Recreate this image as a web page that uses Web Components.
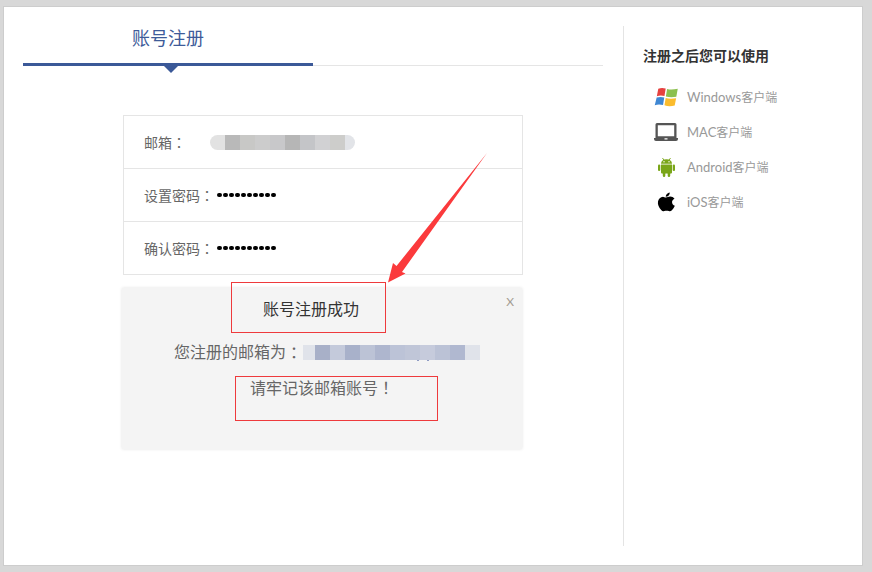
<!DOCTYPE html>
<html lang="zh">
<head>
<meta charset="utf-8">
<title>账号注册</title>
<style>
	html, body { margin: 0; height: 100%; }
	body { font-family: "Lato", "Noto Sans CJK SC", sans-serif; }
</style>
</head>
<body>
<reg-page>
	<reg-tabs title-text="账号注册"></reg-tabs>
	<reg-form>
		<form-row label="邮箱："><pixel-blur slot="value" variant="mail"></pixel-blur></form-row>
		<form-row label="设置密码："><pass-dots slot="value"></pass-dots></form-row>
		<form-row label="确认密码："><pass-dots slot="value"></pass-dots></form-row>
	</reg-form>
	<success-dialog></success-dialog>
	<client-list slot="side" heading="注册之后您可以使用">
		<client-item name="Windows" icon="windows"></client-item>
		<client-item name="MAC" icon="mac"></client-item>
		<client-item name="Android" icon="android"></client-item>
		<client-item name="iOS" icon="ios"></client-item>
	</client-list>
</reg-page>

<script>
	(() => {
		const CJK = `"Lato", "Noto Sans CJK SC", sans-serif`;

		// full-width punctuation sits centred in the reference, as the TC cut draws it
		const punct = text => text.replace(/[：！]/g, m => `<span lang="zh-Hant" style="font-family:'Noto Sans CJK TC',sans-serif">${m}</span>`);

		const define = (name, render) => {
			customElements.define(name, class extends HTMLElement {
				constructor() {
					super();
					this.attachShadow({ mode: 'open' });
				}
				connectedCallback() {
					this.shadowRoot.innerHTML = render(this);
				}
			});
		};

		define('reg-page', () => `
			<style>
				:host {
					display: block;
					box-sizing: border-box;
					width: 872px;
					height: 572px;
					padding: 6px 9px 6px 3px;
					background: #d8d8d8;
					font-family: ${CJK};
				}
				.panel {
					box-sizing: border-box;
					position: relative;
					height: 100%;
					display: grid;
					grid-template-columns: 619px 1fr;
					background: #fff;
					border: 1px solid #cdcdcd;
				}
				.main { padding: 0 0 0 19px; }
				.side {
					margin-top: 19px;
					height: 520px;
					border-left: 1px solid #e4e4e4;
					padding-left: 19px;
				}
				svg { position: absolute; left: -1px; top: -1px; margin: -6px 0 0 -3px; pointer-events: none; }
			</style>
			<div class="panel">
				<div class="main"><slot></slot></div>
				<div class="side"><slot name="side"></slot></div>
				<svg width="872" height="572" viewBox="0 0 872 572">
					<path d="M487 153 L402 272 L405.500 273.500 L388 282.500 L393 263 L396.500 266 Z" fill="#fb3a3c"/>
				</svg>
			</div>
		`);

		define('reg-tabs', el => `
			<style>
				:host { display: block; width: 580px; height: 58px; position: relative; border-bottom: 1px solid #e5e5e5; }
				.tab {
					box-sizing: border-box;
					width: 290px;
					height: 59px;
					padding-top: 18px;
					border-bottom: 3px solid #3b5998;
					text-align: center;
					font-size: 18px;
					line-height: 26px;
					color: #3e5b99;
				}
				.caret {
					position: absolute;
					left: 141px;
					top: 59px;
					width: 0;
					height: 0;
					border: 7px solid transparent;
					border-top-color: #3b5998;
					border-bottom: 0;
				}
			</style>
			<div class="tab">${el.getAttribute('title-text')}</div>
			<div class="caret"></div>
		`);

		define('reg-form', () => `
			<style>
				:host {
					display: block;
					box-sizing: border-box;
					width: 400px;
					margin: 49px 0 0 100px;
					border: 1px solid #e5e5e5;
				}
				::slotted(form-row:not(:last-child)) { border-bottom: 1px solid #e5e5e5; }
			</style>
			<slot></slot>
		`);

		define('form-row', el => `
			<style>
				:host {
					display: flex;
					align-items: center;
					box-sizing: border-box;
					height: 53px;
					padding-left: 20px;
					font-size: 14px;
					color: #666;
				}
				:host(:last-child) { height: 52px; }
				.label { white-space: nowrap; }
			</style>
			<span class="label">${punct(el.getAttribute('label'))}</span>
			<slot name="value"></slot>
		`);

		define('pass-dots', () => `
			<style>
				:host { display: flex; gap: 1.500px; margin-left: 3px; }
				i { width: 4.500px; height: 4.500px; border-radius: 50%; background: #000; }
			</style>
			${'<i></i>'.repeat(10)}
		`);

		const BLUR = {
			mail: { cells: ['#e2e2e2', '#b9b9b9', '#c8c8c6', '#cccccc', '#c8c8ca', '#b6b6b6', '#c4c5c8', '#d1d1d3', '#cdcdcb', '#e2e4e8'], first: 15, last: 10, margin: '0 0 0 24px', radius: '8px' },
			dialog: { cells: ['#e0e3ea', '#a8b0c8', '#c4cadb', '#a8b1ca', '#bcc3d6', '#aeb6ce', '#bcc3d7', '#c0c6d8', '#c6cbdc', '#bbc2d6', '#b0b8d0', '#e0e3ea'], first: 12, last: 15, margin: '0 0 0 1px', radius: '0' }
		};

		define('pixel-blur', el => {
			const b = BLUR[el.getAttribute('variant')];
			const cells = b.cells.map((c, i) => {
				const w = i === 0 ? b.first : i === b.cells.length - 1 ? b.last : 15;
				return `<i style="width:${w}px;background:${c}"></i>`;
			}).join('');
			return `
				<style>
					:host { display: inline-flex; height: 15px; margin: ${b.margin}; border-radius: ${b.radius}; overflow: hidden; }
					i { display: block; height: 15px; }
				</style>
				${cells}
			`;
		});

		define('success-dialog', () => `
			<style>
				:host {
					display: block;
					position: relative;
					box-sizing: border-box;
					width: 400px;
					height: 161px;
					margin: 13px 0 0 99px;
					padding-top: 8px;
					background: #f4f4f4;
					box-shadow: 0 0 3px rgba(0, 0, 0, .12);
					color: #666;
					font-size: 16px;
				}
				.title { height: 26px; line-height: 26px; padding-right: 22px; text-align: center; color: #333; }
				.mail { display: flex; align-items: center; height: 26px; margin-top: 17px; padding-left: 52px; line-height: 26px; }
				.tip { height: 26px; line-height: 26px; margin-top: 9px; padding-left: 128px; }
				.close { position: absolute; right: 8px; top: 5px; font-size: 12px; line-height: 18px; color: #a39c92; }
				.box { position: absolute; box-sizing: border-box; border: 1px solid rgb(238, 58, 60); }
				.m1 { left: 109px; top: -6px; width: 155px; height: 51px; }
				.m2 { left: 113px; top: 88px; width: 203px; height: 45px; }
				.speck { position: absolute; top: 72px; width: 2px; height: 1px; background: #8f9cc4; }
			</style>
			<div class="title">账号注册成功</div>
			<div class="mail">${punct('您注册的邮箱为：')}<pixel-blur variant="dialog"></pixel-blur></div>
			<div class="tip">${punct('请牢记该邮箱账号！')}</div>
			<span class="close">X</span>
			<div class="box m1"></div>
			<div class="box m2"></div>
			<i class="speck" style="left:295px"></i>
			<i class="speck" style="left:305px"></i>
		`);

		define('client-list', el => `
			<style>
				:host { display: block; padding-top: 20px; }
				h3 { margin: 0 0 13px; font-size: 14px; line-height: 20px; font-weight: 700; color: #333; }
				.items { display: flex; flex-direction: column; padding-left: 11px; }
			</style>
			<h3>${el.getAttribute('heading')}</h3>
			<div class="items"><slot></slot></div>
		`);

		const ICONS = {
			windows: `<svg width="26" height="20" viewBox="0 0 26 20"><g transform="scale(.95 1)">
				<path d="M4.500 1.800 Q8 .2 12.300 1.500 L11 9 Q7 7.800 3 9.200 Z" fill="#e6413f"/>
				<path d="M13.800 2 Q18 3.300 25 1.800 L23.500 9.700 Q17.500 10.800 12.500 9.400 Z" fill="#8cc04f"/>
				<path d="M2.800 10.500 Q7 9.300 10.800 10.500 L9.500 18 Q5 16.700 .8 18.200 Z" fill="#3f87d3"/>
				<path d="M12.300 11 Q17 12.200 23.300 11.200 L21.800 18.500 Q16 20 11 18.300 Z" fill="#fbbc2d"/>
			</g></svg>`,
			mac: `<svg width="26" height="20" viewBox="0 0 26 20">
				<path d="M3 1 H21 A1.500 1.500 0 0 1 22.500 2.500 V16 H1.500 V2.500 A1.500 1.500 0 0 1 3 1 Z M3.800 3.200 V14.300 H20.200 V3.200 Z" fill="#555" fill-rule="evenodd"/>
				<path d="M0 16 H24 V17 Q24 19 22 19 H2 Q0 19 0 17 Z M10.500 16.300 V17.500 H13.500 V16.300 Z" fill="#555" fill-rule="evenodd"/>
			</svg>`,
			android: `<svg width="26" height="20" viewBox="0 0 26 20"><g transform="translate(-.5 0)">
				<path d="M9 1 L10.300 3 M17 1 L15.700 3" stroke="#7aa619" stroke-width=".9" fill="none"/>
				<path d="M7.500 6.800 Q7.800 2.200 13 2.200 Q18.200 2.200 18.500 6.800 Z" fill="#7aa619"/>
				<path d="M7.500 7.500 H18.500 V15.500 Q18.500 16.500 17.500 16.500 H8.500 Q7.500 16.500 7.500 15.500 Z" fill="#7aa619"/>
				<rect x="4.500" y="7.500" width="2.300" height="6.500" rx="1.100" fill="#7aa619"/>
				<rect x="19.200" y="7.500" width="2.300" height="6.500" rx="1.100" fill="#7aa619"/>
				<rect x="9.300" y="15" width="2.500" height="5" rx="1.200" fill="#7aa619"/>
				<rect x="14.200" y="15" width="2.500" height="5" rx="1.200" fill="#7aa619"/>
				<circle cx="10.500" cy="4.700" r=".7" fill="#fff"/>
				<circle cx="15.500" cy="4.700" r=".7" fill="#fff"/>
			</g></svg>`,
			ios: `<svg width="26" height="20" viewBox="0 0 26 20"><g transform="translate(-2.600 0) scale(1.100 1)">
				<path d="M13 5.500 C14.500 5.500 15.500 4.600 17 4.600 C18.700 4.600 20 5.400 21 6.800 C19.300 7.800 18.700 9 18.800 10.400 C18.900 12 19.800 13.100 21.300 13.700 C20.600 15.600 19.700 17 18.600 18.300 C17.800 19.300 16.900 19.500 15.900 19.100 C14.400 18.500 13.200 18.500 11.700 19.100 C10.700 19.500 9.800 19.200 8.900 18.100 C6.700 15.500 5.500 12.300 6 9.500 C6.400 6.700 8.300 4.800 10.500 4.700 C11.500 4.700 12.200 5.500 13 5.500 Z" fill="#000"/>
				<path d="M13 4.800 C13 2.600 14.600 .9 16.700 .5 C16.800 2.800 15.200 4.700 13 4.800 Z" fill="#000"/>
			</g></svg>`
		};

		define('client-item', el => `
			<style>
				:host { display: flex; align-items: center; gap: 7px; height: 35px; font-size: 13px; color: #999; }
				svg { display: block; flex: none; }
				b { font-weight: 400; font-size: 12px; }
			</style>
			${ICONS[el.getAttribute('icon')]}
			<span>${el.getAttribute('name')}<b>客户端</b></span>
		`);
	})()
</script>
</body>
</html>
